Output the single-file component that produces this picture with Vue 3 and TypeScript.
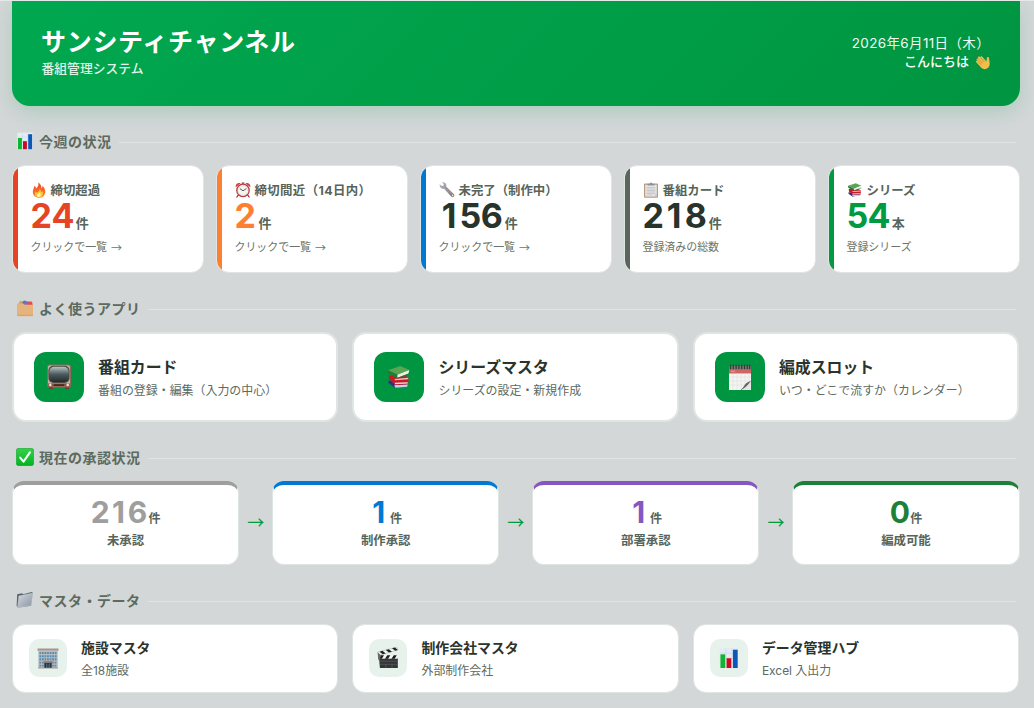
<script setup lang="ts">
interface Stat {
  icon: string
  label: string
  value: number
  unit: string
  note: string
  arrow: boolean
  tone: string
}
interface LinkCard {
  icon: string
  title: string
  desc: string
}
interface Step {
  value: number
  label: string
  tone: string
}

const stats: Stat[] = [
  { icon: 'fire', label: '締切超過', value: 24, unit: '件', note: 'クリックで一覧', arrow: true, tone: 'red' },
  { icon: 'alarm', label: '締切間近（14日内）', value: 2, unit: '件', note: 'クリックで一覧', arrow: true, tone: 'orange' },
  { icon: 'wrench', label: '未完了（制作中）', value: 156, unit: '件', note: 'クリックで一覧', arrow: true, tone: 'blue' },
  { icon: 'clipboard', label: '番組カード', value: 218, unit: '件', note: '登録済みの総数', arrow: false, tone: 'slate' },
  { icon: 'books', label: 'シリーズ', value: 54, unit: '本', note: '登録シリーズ', arrow: false, tone: 'green' },
]

const apps: LinkCard[] = [
  { icon: 'tv', title: '番組カード', desc: '番組の登録・編集（入力の中心）' },
  { icon: 'books', title: 'シリーズマスタ', desc: 'シリーズの設定・新規作成' },
  { icon: 'calendar', title: '編成スロット', desc: 'いつ・どこで流すか（カレンダー）' },
]

const steps: Step[] = [
  { value: 216, label: '未承認', tone: 'gray' },
  { value: 1, label: '制作承認', tone: 'blue' },
  { value: 1, label: '部署承認', tone: 'purple' },
  { value: 0, label: '編成可能', tone: 'forest' },
]

const masters: LinkCard[] = [
  { icon: 'building', title: '施設マスタ', desc: '全18施設' },
  { icon: 'clapper', title: '制作会社マスタ', desc: '外部制作会社' },
  { icon: 'chart', title: 'データ管理ハブ', desc: 'Excel 入出力' },
]

// Digits are set one per cell so every figure has the same advance.
const digits = (n: number): string[] => String(n).split('')
</script>

<template>
  <div class="page">
    <svg class="sprite" width="0" height="0" aria-hidden="true">
      <defs>
        <linearGradient id="gFire" x1="0" y1="0" x2="0" y2="1">
          <stop offset="0" stop-color="#f0452c" /><stop offset="1" stop-color="#ff8a1e" />
        </linearGradient>
        <linearGradient id="gCheck" x1="0" y1="0" x2="0" y2="1">
          <stop offset="0" stop-color="#35d24a" /><stop offset="1" stop-color="#00b41e" />
        </linearGradient>
        <linearGradient id="gFolder" x1="0" y1="0" x2="1" y2="1">
          <stop offset="0" stop-color="#d3d9df" /><stop offset="1" stop-color="#8791a0" />
        </linearGradient>
        <linearGradient id="gScreen" x1="0" y1="0" x2="0" y2="1">
          <stop offset="0" stop-color="#b4c6c6" /><stop offset="0.5" stop-color="#4b5a5c" /><stop offset="1" stop-color="#20292b" />
        </linearGradient>
        <linearGradient id="gSteel" x1="0" y1="0" x2="1" y2="1">
          <stop offset="0" stop-color="#b3bac1" /><stop offset="1" stop-color="#6f7780" />
        </linearGradient>
      </defs>

      <symbol id="chart" viewBox="0 0 18 18">
        <rect x="1.4" y=".6" width="15.2" height="16.6" fill="#e3ebf4" />
        <path d="M1.4 5h15.200M1.400 9h15.200M1.400 13h15.200M6.500 1.200v16M11.500 1.200v16" stroke="#cbd8e6" stroke-width=".5" />
        <rect x="2" y="6" width="3.900" height="11.200" fill="#0fb52f" />
        <rect x="7" y="9.200" width="3.900" height="8" fill="#c90d20" />
        <rect x="12.200" y="2.200" width="3.900" height="15" fill="#0b58b8" />
      </symbol>

      <symbol id="dividers" viewBox="0 0 18 18">
        <path d="M2 5.500L4.500 1.500l2 1.500h8L17 6v3H1.500z" fill="#d99f5c" />
        <path d="M6.500 5V2.200L9 1.500l2 1v3z" fill="#6672b8" />
        <path d="M11 2.500h4.600l.8 1.200v3H11z" fill="#e04d52" />
        <path d="M6 4.500h5v2H6z" fill="#8b78ad" />
        <path d="M1 5l.8-.6h5.200l1.300 1.400H17v10.600q0 .8-.8.800H1.800q-.8 0-.8-.8z" fill="#e5b47c" />
        <path d="M1.300 16.300h15.500" stroke="#cf9a60" stroke-width=".7" />
      </symbol>

      <symbol id="check" viewBox="0 0 18 18">
        <rect x=".3" y=".3" width="17.400" height="17.400" rx="2.600" fill="url(#gCheck)" stroke="#199c32" stroke-width=".6" />
        <path d="M4.200 9.600l3.300 4L13.900 4.400" fill="none" stroke="#fff" stroke-width="2.100" stroke-linecap="round" stroke-linejoin="round" />
      </symbol>

      <symbol id="folder" viewBox="0 0 18 18">
        <path d="M1.200 3.200l5-1 1 1 8.300-2.200 1.300.8-1.700 13-13.300 2L.6 15z" fill="#59616c" />
        <path d="M2.900 4.900l13-2.600 1.100.6-1.900 11.300-13.600 2.500z" fill="url(#gFolder)" stroke="#e6eaee" stroke-width=".35" />
      </symbol>

      <symbol id="fire" viewBox="0 0 16 16">
        <path d="M7.300.5c2.500 1.700 3.200 4 3.100 5.800.9-.4 1.100-1.500.9-2.600 2.200 1.800 3.300 4.300 2.900 7-.5 3-2.900 5-6 5-3.500 0-6.500-2.300-6.400-6C1.900 7 3.400 5.700 3.400 3.800c1.100.8 1.600 1.900 1.600 2.800C6.900 5.100 7.900 3 7.300.5z" fill="url(#gFire)" />
        <path d="M8.600 6.400c1.400 1.600 1 3 1.500 3.800.5-.1.900-.7 1-1.400 1.200 2 1.100 4.100-.2 5.500-1.500 1.600-4.600 1.600-6-.2-1.300-1.600-1-3.300-.2-4.700.4.800.9 1.200 1.300 1.200 1.600-.8 2.800-2.100 2.600-4.200z" fill="#ffc83b" />
        <path d="M8.200 10.300c1.600 1.400 1.900 3.200.8 4.300-.9.800-2.300.6-2.900-.4-.5-1 .1-1.700.7-2.200.9-.7 1.300-1 1.400-1.700z" fill="#fff3a6" />
      </symbol>

      <symbol id="alarm" viewBox="0 0 16 16">
        <path d="M3.300 13l-1.400 2M12.700 13l1.400 2" stroke="#a12b31" stroke-width="1.300" stroke-linecap="round" />
        <path d="M.8 5.200C-.1 2.400 2.700.1 5.600 1.300zM15.200 5.200c.9-2.800-1.900-5.100-4.800-3.900z" fill="#cb3e42" />
        <path d="M6.700 1.200h2.600" stroke="#9a3037" stroke-width="1.200" />
        <circle cx="8" cy="8.400" r="6.200" fill="#f6f4ee" stroke="#b73b40" stroke-width="1.300" />
        <circle cx="8" cy="8.400" r="4.700" fill="none" stroke="#999" stroke-width=".6" stroke-dasharray=".6 1.860" />
        <path d="M4.900 6.600L8 8.800l3.400-2.200" fill="none" stroke="#333" stroke-width=".8" />
      </symbol>

      <symbol id="wrench" viewBox="0 0 16 16">
        <path d="M.6 2.300l2.400 1.800 1.500-.5.200-1.700L2.800.3C4.700-.2 6.700.6 7.200 2.500c.2.700.2 1.300 0 2l7.700 7.700c1.500 1.600-.8 4-2.500 2.500L5.100 6.800C2.800 7.400.3 5.500.6 2.300z" fill="url(#gSteel)" />
        <path d="M6.600 5.500l7.500 7.600" stroke="#b88" stroke-width=".9" />
        <circle cx="13.600" cy="13.500" r=".8" fill="#f4f4f4" />
      </symbol>

      <symbol id="clipboard" viewBox="0 0 16 16">
        <rect x="1" y="1.400" width="14" height="14.400" rx="1" fill="#b9997a" />
        <rect x="2.200" y="2.800" width="11.600" height="11.800" fill="#e6e6e8" />
        <path d="M3.600 5.500h8.800M3.600 7h8.800M3.600 8.500h8.800M3.600 10h8.800M3.600 11.500h8.800M3.600 13h5.800" stroke="#b9bbc0" stroke-width=".65" />
        <path d="M4.500 3.500V1.800h2Q8-.7 9.500 1.800h2v1.700z" fill="#8e939a" />
        <path d="M10.500 14.600l3.300-3v3z" fill="#c8c8ca" />
      </symbol>

      <symbol id="books" viewBox="0 0 24 24">
        <path d="M2.200 15.500l13.500 1 4.600 2.200-11.800 3.500-6.200-4.600z" fill="#27328b" />
        <path d="M7.500 19.500l12.600-.9-.5 2.300-11 1z" fill="#c9cde6" />
        <path d="M2.500 10.500l14.300-.2 4 2.500-.3 5.800-12.200.7L3 14z" fill="#c51b28" />
        <path d="M7.800 13.800l12.600-1 .1 1.300-12 1z" fill="#efc4c2" />
        <path d="M8 17.400l12-.6.2 1.200-11.700.7z" fill="#efdfdc" />
        <path d="M1.800 5.700L13.200 1.900l8.300 3.600-11 4.500z" fill="#58a553" />
        <path d="M1.800 5.700L10.500 10v3.300L2.500 9.100Q.8 7.400 1.800 5.700z" fill="#267a34" />
        <path d="M10.500 10l11-4.500-.7 3.300-10.300 4z" fill="#eaf1e6" />
        <path d="M10.500 13.300l11-4.300" stroke="#28733a" stroke-width=".8" />
      </symbol>

      <symbol id="wave" viewBox="0 0 18 18">
        <path d="M2.200 6.300C2.300 4.200 3.400 2.900 5 2.200M3.500 14.500c-1.300-.7-2-1.800-2.200-3M10.200 2.200c1.200.2 2 .7 2.700 1.500" fill="none" stroke="#4d7050" stroke-width=".9" stroke-linecap="round" />
        <path d="M7.500 15.300L2.400 9.800c-.9-1.100.4-2.100 1.300-1.300L2.900 7.400c-.8-1.200.8-2.300 1.700-1.200L4.300 5c-.4-1.200 1.100-1.900 1.900-.9l.8.800c-.5-1.100.9-1.900 1.700-.9l4.500 4.900.4-3.500c.1-1.600 2.200-1.500 2.300.1l.7 4.800c.4 3-.9 5.100-2.900 6.200-2.100 1.100-4.500.6-6.200-1.200z" fill="#f0be4c" />
        <path d="M3.700 8.500l4.100 4M4.600 6.200l4.600 4.700M7 4.900l4 4.500" stroke="#b77b20" stroke-width=".7" />
      </symbol>

      <symbol id="tv" viewBox="0 0 26 26">
        <rect x="1" y=".4" width="24" height="23.200" rx="1.800" fill="#8a6a5b" />
        <rect x="2" y="1.400" width="22" height="21.200" rx="1.500" fill="#c3b5a6" />
        <rect x="2.400" y="1.800" width="21.200" height="17.200" rx="5" fill="#4f4843" />
        <rect x="3.300" y="2.700" width="19.400" height="15.400" rx="5" fill="url(#gScreen)" />
        <path d="M2.200 19.400h21.600v3.200H2.200z" fill="#854e3e" />
        <path d="M8 21.100h10" stroke="#41251f" stroke-width="1.600" />
        <circle cx="4.300" cy="20.900" r="1.300" fill="#f0e3d2" /><circle cx="21.700" cy="20.900" r="1.300" fill="#f0e3d2" />
        <path d="M3 23.600h4V25H3zM19 23.600h4V25h-4z" fill="#604436" />
      </symbol>

      <symbol id="calendar" viewBox="0 0 26 26">
        <path d="M2 2h22v24H2z" fill="#f4f4f2" />
        <path d="M2 2h22v7.500H2z" fill="#cf6664" />
        <path d="M2 2h22v3H2z" fill="#777a72" />
        <path d="M3.500.8v4.400M6.300.8v4.400M9.100.8v4.400M11.900.8v4.400M14.700.8v4.400M17.500.8v4.400M20.300.8v4.400M22.700.8v4.400" stroke="#333b35" stroke-width="1.200" />
        <path d="M4 7.300h4" stroke="#e8a19d" stroke-width="1" />
        <path d="M2 13h22M2 17h22M2 21h17M6 9.500V26M10 9.500V26M14 9.500V26M18 9.500v12M22 9.500V18" stroke="#dcdcdc" stroke-width=".55" />
        <path d="M13 26c3-1 3.300-3.700 5-6 1.700-1 4-1.700 6-3.300V26z" fill="#e4e4e2" />
        <path d="M13 26c4-.8 7.400-4 11-9.300-2 1.300-4.800 1.800-5.800 3.500-1.200 1.900-2.700 4.700-5.200 5.800z" fill="#626662" />
      </symbol>

      <symbol id="building" viewBox="0 0 22 22">
        <path d="M.5 1.500h21v2.300H.5z" fill="#aa9288" />
        <path d="M1.300 3.500h19.400V21H1.300z" fill="#b4bdc2" />
        <path d="M2.400 6h17.200M2.400 9.200h17.200M2.400 12.400h17.200" stroke="#5e8cac" stroke-width="2.100" stroke-dasharray="1.800 .76" />
        <path d="M2.400 15.600h4.600M15 15.600h4.600M2.400 18.600h4.600M15 18.600h4.600" stroke="#6687a0" stroke-width="1.900" stroke-dasharray="1.800 .76" />
        <path d="M6.600 14.200h8.800v1.900H6.600z" fill="#94786e" />
        <path d="M7.300 16h7.400v5H7.300z" fill="#213445" />
        <path d="M9.800 16.500V21M12.200 16.500V21" stroke="#6d98b7" stroke-width=".7" />
        <path d="M1 20.600h20v.8H1z" fill="#8c8580" />
      </symbol>

      <symbol id="clapper" viewBox="0 0 22 22">
        <path d="M2 10.500h18.800V21H2.900z" fill="#333536" />
        <path d="M3 14.200h17.500M3 17.300h17.500M9 17v3.800M15 17v3.800" stroke="#67696a" stroke-width=".6" />
        <path d="M.8 8.200h20v3.500h-20z" fill="#f4f4f4" />
        <path d="M1.700 11.700l2.300-3.500h3l-2.200 3.500zM8 11.700l2.300-3.500h3l-2.200 3.500zM14.500 11.700l2.300-3.500h3l-2.200 3.500z" fill="#181a1b" />
        <path d="M.6 5.200L19.900 0l.9 3L1.600 8.300z" fill="#f3f3f3" stroke="#777" stroke-width=".3" />
        <path d="M2.500 4.700l3-.9 3.200 2.600-3 .8zM8.800 3l3-.8L15 4.700l-3 .8zM15 1.300l3-.8L20.800 3l-2.600.7z" fill="#202223" />
        <path d="M.7 5.200l3.400 3.300-2.100 5.300-.9-2z" fill="#66696a" />
      </symbol>
    </svg>

    <header class="hero">
      <div>
        <h1>サンシティチャンネル</h1>
        <p class="subtitle">番組管理システム</p>
      </div>
      <div class="hello">
        <div class="date">2026年6月11日（木）</div>
        <div class="greeting">こんにちは<svg width="17" height="17"><use href="#wave" /></svg></div>
      </div>
    </header>

    <section>
      <h2><svg class="hicon"><use href="#chart" /></svg>今週の状況</h2>
      <div class="stats">
        <article v-for="s in stats" :key="s.label" class="stat" :class="s.tone">
          <div class="stat-label"><svg width="16" height="16"><use :href="'#' + s.icon" /></svg>{{ s.label }}</div>
          <div class="figure"><b><i v-for="(d, k) in digits(s.value)" :key="k">{{ d }}</i></b><span class="unit">{{ s.unit }}</span></div>
          <div class="note">{{ s.note }}<span v-if="s.arrow" class="note-arrow">→</span></div>
        </article>
      </div>
    </section>

    <section>
      <h2><svg class="hicon"><use href="#dividers" /></svg>よく使うアプリ</h2>
      <div class="trio">
        <article v-for="a in apps" :key="a.title" class="app">
          <div class="tile"><svg width="26" height="26"><use :href="'#' + a.icon" /></svg></div>
          <div class="app-text">
            <h3>{{ a.title }}</h3>
            <p>{{ a.desc }}</p>
          </div>
        </article>
      </div>
    </section>

    <section>
      <h2><svg class="hicon"><use href="#check" /></svg>現在の承認状況</h2>
      <div class="flow">
        <template v-for="(s, i) in steps" :key="s.label">
          <div v-if="i > 0" class="flow-arrow">→</div>
          <article class="step" :class="s.tone">
            <div class="figure"><b><i v-for="(d, k) in digits(s.value)" :key="k">{{ d }}</i></b><span class="unit">件</span></div>
            <div class="step-label">{{ s.label }}</div>
          </article>
        </template>
      </div>
    </section>

    <section>
      <h2><svg class="hicon"><use href="#folder" /></svg>マスタ・データ</h2>
      <div class="trio">
        <article v-for="m in masters" :key="m.title" class="master">
          <div class="tile"><svg width="22" height="22"><use :href="'#' + m.icon" /></svg></div>
          <div>
            <h3>{{ m.title }}</h3>
            <p>{{ m.desc }}</p>
          </div>
        </article>
      </div>
    </section>
  </div>
</template>

<style>
body {
  margin: 0;
  background: #d3d7d8;
  overflow: hidden;
}
</style>

<style scoped>
* {
  box-sizing: border-box;
}
.page {
  height: 708px;
  padding: 0 14px 0 12px;
  border-top: 1px solid #e6e9e9;
  overflow: hidden;
  font-family: Inter, 'Noto Sans CJK JP', sans-serif;
  color: #2a332c;
}
.sprite {
  position: absolute;
}
h1, h2, h3, p {
  margin: 0;
}
svg {
  flex: none;
  display: block;
}
.hero {
  height: 105px;
  padding: 0 29px 0 30px;
  display: flex;
  justify-content: space-between;
  border-radius: 0 0 18px 18px;
  background: linear-gradient(135deg, #00a850 0%, #009540 100%);
  box-shadow: 0 6px 20px rgba(0, 149, 64, 0.18);
  color: #fff;
}
h1 {
  margin-top: 25px;
  margin-left: -1px;
  font-size: 25px;
  line-height: 32px;
  font-weight: 700;
  letter-spacing: 0.7px;
}
.subtitle {
  margin: 1px 0 0 -0.5px;
  font-size: 12.8px;
  line-height: 20px;
  font-weight: 500;
  opacity: 0.88;
}
.hello {
  margin-top: 33px;
  text-align: right;
}
.date {
  padding-right: 1px;
  font-size: 13.5px;
  letter-spacing: 0.35px;
  line-height: 19px;
  opacity: 0.95;
}
.greeting {
  display: flex;
  justify-content: flex-end;
  align-items: center;
  gap: 5px;
  font-size: 13px;
  line-height: 17px;
  font-weight: 500;
}
section {
  margin-top: 25px;
}
h2 {
  display: flex;
  align-items: center;
  height: 22px;
  padding: 0 4px;
  margin-bottom: 12px;
  font-size: 14px;
  line-height: 22px;
  font-weight: 700;
  letter-spacing: 0.5px;
  color: #5c6a5f;
}
h2::after {
  content: '';
  flex: 1;
  height: 1px;
  margin-left: 7px;
  background: #dfe5e0;
}
.hicon {
  width: 18px;
  height: 18px;
  margin: 0 5px 2px 0;
}
.stats {
  display: grid;
  grid-template-columns: repeat(5, 1fr);
  gap: 12px;
}
.stat {
  position: relative;
  height: 108px;
  padding: 16px 12px 0 17.5px;
  border: 1px solid #dfe5e0;
  border-radius: 13px;
  background: #fff;
  overflow: hidden;
}
.stat::before {
  content: '';
  position: absolute;
  inset: 0 auto 0 0;
  width: 5px;
  background: var(--tone);
}
.stat-label {
  display: flex;
  align-items: center;
  gap: 4px;
  font-size: 12.4px;
  line-height: 18px;
  font-weight: 700;
  color: #56645a;
  white-space: nowrap;
}
.orange .stat-label {
  letter-spacing: 0.4px;
}
.stat-label svg {
  margin-bottom: 2px;
}
.figure {
  display: flex;
  align-items: baseline;
  color: var(--num, var(--tone));
}
.figure b {
  display: flex;
  font-weight: 700;
}
.figure i {
  width: 0.62em;
  font-style: normal;
  text-align: center;
}
.stat .figure {
  height: 34px;
  line-height: 32px;
}
.stat .figure b {
  font-size: 34px;
}
.unit {
  margin-left: 3px;
  font-size: 13px;
  font-weight: 700;
  color: #56645a;
}
.note {
  display: flex;
  margin-top: 5px;
  font-size: 10.95px;
  line-height: 16px;
  color: #69756c;
}
.note-arrow {
  margin-left: 4px;
}
.note-arrow, .flow-arrow {
  font-family: 'Noto Sans CJK JP', sans-serif;
}
.red { --tone: #e54525; }
.orange { --tone: #ff7f32; }
.blue { --tone: #0078d4; }
.slate { --tone: #5a665d; --num: #28332b; }
.green { --tone: #009a41; }
.gray { --tone: #9e9e9e; }
.purple { --tone: #8458c0; }
.forest { --tone: #1c8039; }
.stat.blue { --num: #28332b; }
.trio {
  display: grid;
  grid-template-columns: repeat(3, 1fr);
  gap: 14.4px;
  padding-right: 1px;
}
.app, .master {
  display: flex;
  align-items: center;
  gap: 14px;
  background: #fff;
}
.app {
  height: 90px;
  padding: 0 20px;
  border: 2px solid #dfe5e0;
  border-radius: 14px;
}
.tile {
  flex: none;
  display: flex;
  align-items: center;
  justify-content: center;
}
.app .tile {
  width: 50px;
  height: 50px;
  border-radius: 12px;
  background: #009540;
}
.app-text {
  padding-top: 3px;
}
.app h3 {
  font-size: 15.9px;
  line-height: 24px;
  font-weight: 700;
}
.app p {
  margin-top: 1px;
  font-size: 11.95px;
  line-height: 20px;
  color: #5c6a5f;
}
.flow {
  display: flex;
  padding-right: 0.5px;
}
.step {
  flex: 1;
  height: 84px;
  padding-top: 12px;
  border: 1px solid #dfe5e0;
  border-top: 4px solid var(--tone);
  border-radius: 12px;
  background: #fff;
}
.step .figure {
  justify-content: center;
  height: 30px;
  line-height: 30px;
}
.step .figure b {
  font-size: 30px;
}
.step .unit {
  margin-left: 2px;
  font-size: 12px;
}
.step-label {
  margin-top: 5px;
  text-align: center;
  font-size: 12.4px;
  line-height: 18px;
  font-weight: 700;
  color: #56645a;
}
.flow-arrow {
  width: 33px;
  line-height: 82px;
  text-align: center;
  font-size: 17px;
  color: #009a41;
}
.master {
  height: 69px;
  padding: 0 16px;
  border: 1px solid #dfe5e0;
  border-radius: 13px;
}
.master .tile {
  width: 38px;
  height: 38px;
  margin-top: -1px;
  border-radius: 10px;
  background: #e8f2ec;
}
.master h3 {
  font-size: 13.9px;
  line-height: 22px;
  font-weight: 700;
}
.master p {
  margin-top: 2px;
  font-size: 11.95px;
  line-height: 20px;
  color: #5c6a5f;
}
</style>
